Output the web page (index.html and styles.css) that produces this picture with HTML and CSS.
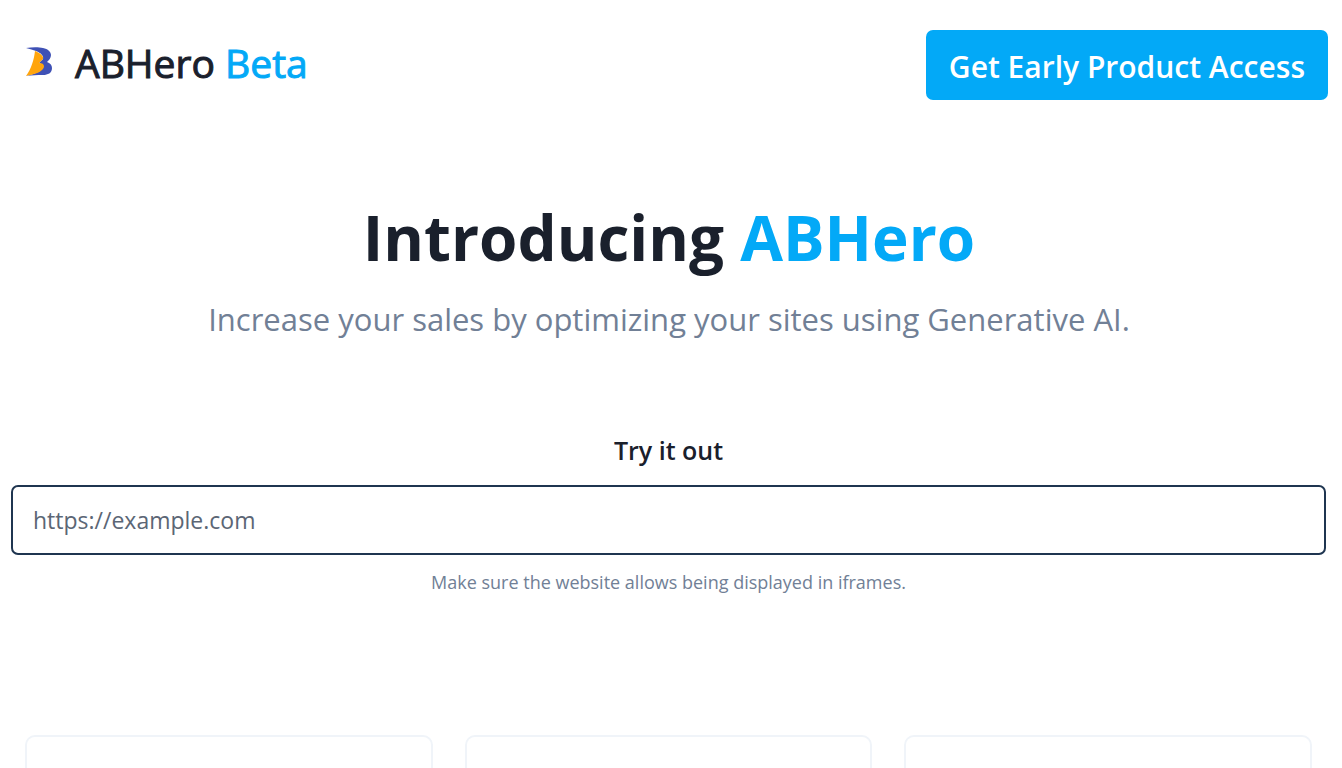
FILE: index.html
```html
<!DOCTYPE html>
<html lang="en">
<head>
<meta charset="utf-8">
<title>ABHero</title>
<link rel="stylesheet" href="styles.css">
</head>
<body>
<header class="header">
  <a class="brand" href="#">
    <svg class="logo" viewBox="0 0 27 30" aria-hidden="true">
      <path fill="#3f51b5" d="M0 1C6 0 13 0 17 1c5 1 8 4 8 7 0 3-2 5-4 7 3 1 5 3 5 6 0 5-4 7-9 7-6 0-11 0-17 1 8-2 14-4 17-8 1-2 0-4-4-5l4-4c1-3-2-6-7-8C7 3 4 2 0 1z"/>
      <path fill="#ffa50d" d="M9 4c5 2 9 5 8 8l-4 4c5 0 6 3 4 6-3 4-9 5-17 7C5 22 8 13 9 4z"/>
    </svg>
    <span class="name">ABHero <span class="beta">Beta</span></span>
  </a>
  <button class="cta" type="button">Get Early Product Access</button>
</header>
<main class="main">
  <section class="hero">
    <h1 class="title">Introducing <span class="accent">ABHero</span></h1>
    <p class="subtitle">Increase your sales by optimizing your sites using Generative AI.</p>
  </section>
  <form class="try">
    <label class="try-label" for="url">Try it out</label>
    <input class="url" id="url" type="url" placeholder="https://example.com">
    <p class="hint">Make sure the website allows being displayed in iframes.</p>
  </form>
  <section class="cards">
    <div class="card"></div>
    <div class="card"></div>
    <div class="card"></div>
  </section>
</main>
</body>
</html>
```
FILE: styles.css
```css
* { box-sizing: border-box; }
body { display: flex; flex-direction: column; min-height: 100vh; margin: 0; background: #fff; color: #1a202c; font-family: "Segoe UI", "Open Sans", "Noto Sans", sans-serif; }
.header { display: flex; justify-content: space-between; align-items: flex-start; padding: 30px 14px 0 26px; }
.brand { display: flex; align-items: center; gap: 22px; height: 64px; color: inherit; text-decoration: none; }
.logo { width: 27px; height: 30px; }
.name { font-size: 39px; font-weight: 500; -webkit-text-stroke: 1px currentColor; }
.beta { color: #03a9f7; }
.cta { height: 70px; padding: 2px 23px 0; border: 0; border-radius: 7px; background: #03a9f7; color: #fff; font: 600 30px "Segoe UI", "Open Sans", sans-serif; }
.main { display: flex; flex-direction: column; flex: 1; }
.hero { padding: 97px 4px 0 0; text-align: center; }
.title { margin: 0; font-size: 62px; line-height: 80px; font-weight: 700; }
.accent { color: #03a9f7; }
.subtitle { margin: 20px 0 0; font-size: 31px; line-height: 44px; color: #718096; }
.try { display: flex; flex-direction: column; align-items: center; padding: 91px 16px 0 11px; }
.try-label { font-size: 25px; line-height: 36px; font-weight: 600; }
.url { width: 100%; height: 70px; margin-top: 17px; padding: 0 20px; border: 2px solid #1f3550; border-radius: 7px; background: #fff; font: 23px "Segoe UI", "Open Sans", sans-serif; }
.url::placeholder { color: #5b6675; }
.hint { margin: 14px 0 0; font-size: 18px; line-height: 26px; color: #718096; }
.cards { display: grid; flex: 1; grid-template-columns: repeat(3, 1fr); gap: 32px; padding: 140px 30px 0 25px; }
.card { border: 2px solid #f0f4f9; border-bottom: 0; border-radius: 10px 10px 0 0; }
```
